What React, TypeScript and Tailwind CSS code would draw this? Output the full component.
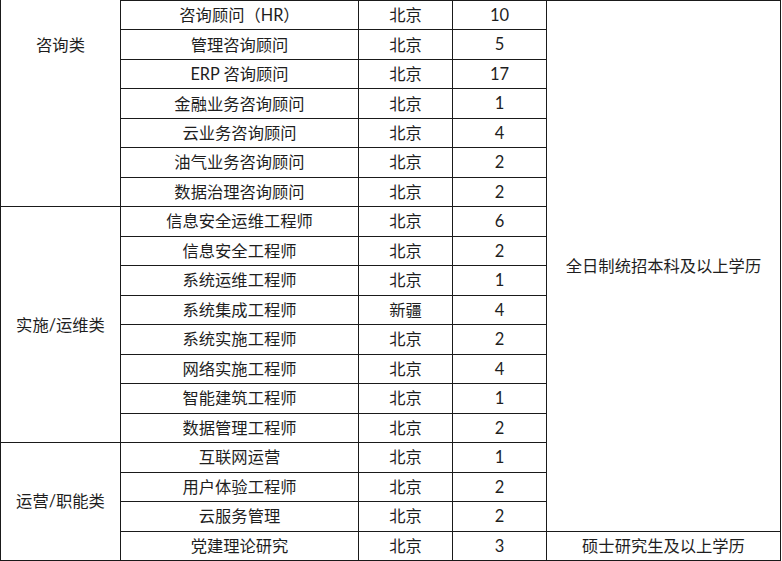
import React from "react";

const rows: [string, string, string][] = [
  ["咨询顾问（HR）", "北京", "10"],
  ["管理咨询顾问", "北京", "5"],
  ["ERP 咨询顾问", "北京", "17"],
  ["金融业务咨询顾问", "北京", "1"],
  ["云业务咨询顾问", "北京", "4"],
  ["油气业务咨询顾问", "北京", "2"],
  ["数据治理咨询顾问", "北京", "2"],
  ["信息安全运维工程师", "北京", "6"],
  ["信息安全工程师", "北京", "2"],
  ["系统运维工程师", "北京", "1"],
  ["系统集成工程师", "新疆", "4"],
  ["系统实施工程师", "北京", "2"],
  ["网络实施工程师", "北京", "4"],
  ["智能建筑工程师", "北京", "1"],
  ["数据管理工程师", "北京", "2"],
  ["互联网运营", "北京", "1"],
  ["用户体验工程师", "北京", "2"],
  ["云服务管理", "北京", "2"],
  ["党建理论研究", "北京", "3"],
];

const cell = "bg-white flex items-center justify-center whitespace-nowrap";

export default function App() {
  return (
    <div className="w-[782px] h-[561px] bg-white overflow-hidden">
      <div
        className="grid w-[781px] h-[561px] bg-[#1a1a1a] p-px gap-px text-[16.3px] text-[#1e1e1e] leading-none"
        style={{
          gridTemplateColumns: "119px 237px 93px 93px 233px",
          gridTemplateRows: "repeat(19, minmax(0, 1fr))",
          fontFamily: 'Lato, "Noto Sans CJK SC", sans-serif',
        }}
      >
        <div className="bg-white -mt-px row-start-1 row-end-8 col-start-1 flex justify-center items-start pt-[37px]">
          咨询类
        </div>
        <div className={`${cell} row-start-8 row-end-16 col-start-1`}>实施/运维类</div>
        <div className={`${cell} row-start-16 row-end-20 col-start-1`}>运营/职能类</div>
        {rows.map(([job, loc, n], i) => (
          <React.Fragment key={i}>
            <div className={`${cell} col-start-2`} style={{ gridRowStart: i + 1 }}>
              {job}
            </div>
            <div className={`${cell} col-start-3`} style={{ gridRowStart: i + 1 }}>
              {loc}
            </div>
            <div className={`${cell} col-start-4 text-[16.5px]`} style={{ gridRowStart: i + 1 }}>
              {n}
            </div>
          </React.Fragment>
        ))}
        <div className={`${cell} row-start-1 row-end-19 col-start-5`}>全日制统招本科及以上学历</div>
        <div className={`${cell} row-start-19 col-start-5`}>硕士研究生及以上学历</div>
      </div>
    </div>
  );
}
